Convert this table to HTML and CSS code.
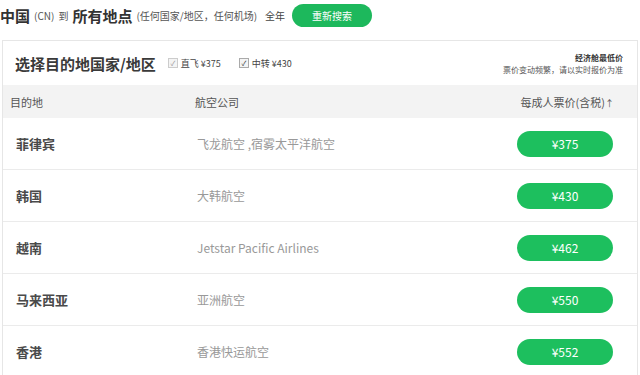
FILE: index.html
```html
<!DOCTYPE html>
<html lang="zh">
<head>
<meta charset="utf-8">
<link rel="stylesheet" href="styles.css">
</head>
<body>
<div class="top">
  <span class="big">中国</span><span class="small">(CN)</span><span class="small">到</span><span class="big">所有地点</span><span class="small">(任何国家/地区，任何机场)</span><span class="year">全年</span>
  <button class="btn">重新搜索</button>
</div>
<div class="panel">
  <div class="phead">
    <div class="ptitle">选择目的地国家/地区</div>
    <label class="chk"><span class="box light">✓</span>直飞 ¥375</label>
    <label class="chk"><span class="box">✓</span>中转 ¥430</label>
    <div class="note">
      <div class="note1">经济舱最低价</div>
      <div class="note2">票价变动频繁，请以实时报价为准</div>
    </div>
  </div>
  <div class="thead">
    <div class="c1">目的地</div>
    <div class="c2">航空公司</div>
    <div class="c3">每成人票价(含税)<span class="arrow">↑</span></div>
  </div>
  <div class="row"><div class="c1 dest">菲律宾</div><div class="c2 air">飞龙航空 ,宿雾太平洋航空</div><div class="c3"><span class="price">¥375</span></div></div>
  <div class="row"><div class="c1 dest">韩国</div><div class="c2 air">大韩航空</div><div class="c3"><span class="price">¥430</span></div></div>
  <div class="row"><div class="c1 dest">越南</div><div class="c2 air">Jetstar Pacific Airlines</div><div class="c3"><span class="price">¥462</span></div></div>
  <div class="row"><div class="c1 dest">马来西亚</div><div class="c2 air">亚洲航空</div><div class="c3"><span class="price">¥550</span></div></div>
  <div class="row"><div class="c1 dest">香港</div><div class="c2 air">香港快运航空</div><div class="c3"><span class="price">¥552</span></div></div>
</div>
</body>
</html>
```
FILE: styles.css
```css
html, body {
  margin: 0;
  padding: 0;
  background: #fff;
  font-family: "Noto Sans CJK SC", "Liberation Sans", sans-serif;
  overflow: hidden;
  height: 375px;
}
.top {
  height: 28px;
  display: flex;
  align-items: center;
  padding-top: 1px;
  color: #333;
  margin-bottom: 11px;
}
.big {
  font-size: 15px;
  font-weight: bold;
  color: #333;
  margin-right: 4px;
}
.small {
  font-size: 10px;
  color: #555;
  margin-right: 4px;
}
.year {
  font-size: 10px;
  color: #444;
  margin-left: 4px;
  margin-right: 7px;
}
.btn {
  width: 80px;
  height: 23px;
  border: none;
  border-radius: 12px;
  background: #1db85c;
  color: #fff;
  font-family: inherit;
  font-size: 10px;
  padding: 0;
}
.panel {
  margin-left: 2px;
  width: 634px;
  border: 1px solid #e6e6e6;
  border-bottom: none;
}
.phead {
  height: 44px;
  display: flex;
  align-items: center;
  padding: 0 14px 0 12px;
}
.ptitle {
  font-size: 15px;
  font-weight: bold;
  color: #3a3a3a;
  margin-right: 12px;
}
.chk {
  display: flex;
  align-items: center;
  font-size: 9px;
  color: #444;
  margin-right: 18px;
}
.box {
  width: 8px;
  height: 8px;
  border: 1px solid #aaa;
  font-size: 7px;
  line-height: 8px;
  text-align: center;
  margin-right: 3px;
  color: #333;
  background: #f4f4f4;
}
.box.light { color: #999; border-color: #ccc; }
.note {
  margin-left: auto;
  text-align: right;
  line-height: 12px;
  padding-top: 2px;
}
.note1 { font-size: 8px; font-weight: bold; color: #333; }
.note2 { font-size: 8px; color: #555; }
.thead {
  height: 33px;
  background: #f3f3f3;
  display: flex;
  align-items: center;
  font-size: 11px;
  color: #555;
}
.c1 { width: 185px; padding-left: 7px; }
.c2 { flex: 1; }
.c3 { width: 120px; text-align: right; padding-right: 24px; }
.thead .c3 { padding-right: 23px; }
.arrow { font-size: 9px; }
.row {
  height: 51px;
  display: flex;
  align-items: center;
  border-bottom: 1px solid #ebebeb;
}
.row .c1 { padding-left: 13px; width: 179px; }
.row .c2 { padding-left: 2px; }
.dest { font-size: 13px; font-weight: bold; color: #4a4a4a; }
.air { font-size: 12px; color: #999; }
.price {
  display: inline-block;
  width: 96px;
  height: 26px;
  line-height: 26px;
  text-align: center;
  border-radius: 13px;
  background: #1dbf5e;
  color: #fff;
  font-size: 12px;
}
```
